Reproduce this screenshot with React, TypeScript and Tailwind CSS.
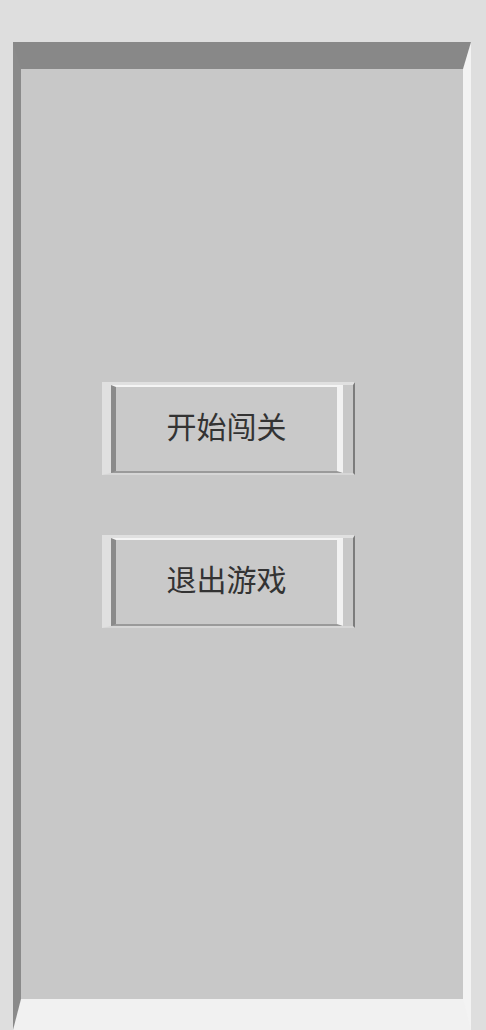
const BUTTONS = ['开始闯关', '退出游戏'];

function MenuButton({ label }: { label: string }) {
  return (
    <div className="flex w-[253px] h-[93px] border-l-[9px] border-l-[#e0e0e0] border-t-[3px] border-t-[#e0e0e0] border-b-[2px] border-b-[#d6d6d6] border-r-[2px] border-r-[#7c7c7c] pr-[10px]">
      <button
        type="button"
        className="flex-1 flex items-center justify-center pb-[7px] bg-[#c9c9c9] border-l-[5px] border-l-[#8a8a8a] border-t-[2px] border-t-[#f4f4f4] border-r-[6px] border-r-[#f2f2f2] border-b-[2px] border-b-[#9a9a9a] text-[30px] text-[#333333] cursor-pointer"
        style={{ fontFamily: '"Noto Sans CJK SC", "Noto Sans", sans-serif' }}
      >
        {label}
      </button>
    </div>
  );
}

export default function App() {
  return (
    <div className="w-[486px] h-[1030px] bg-[#dedede] overflow-hidden pt-[42px] pl-[13px]">
      <div className="w-[458px] h-[988px] border-t-[27px] border-t-[#888888] border-l-[8px] border-l-[#8a8a8a] border-r-[8px] border-r-[#f3f3f3] border-b-[31px] border-b-[#f1f1f1] bg-[#c8c8c8]">
        <div className="flex flex-col gap-[60px] pt-[313px] pl-[81px]">
          {BUTTONS.map((b) => (
            <MenuButton key={b} label={b} />
          ))}
        </div>
      </div>
    </div>
  );
}
